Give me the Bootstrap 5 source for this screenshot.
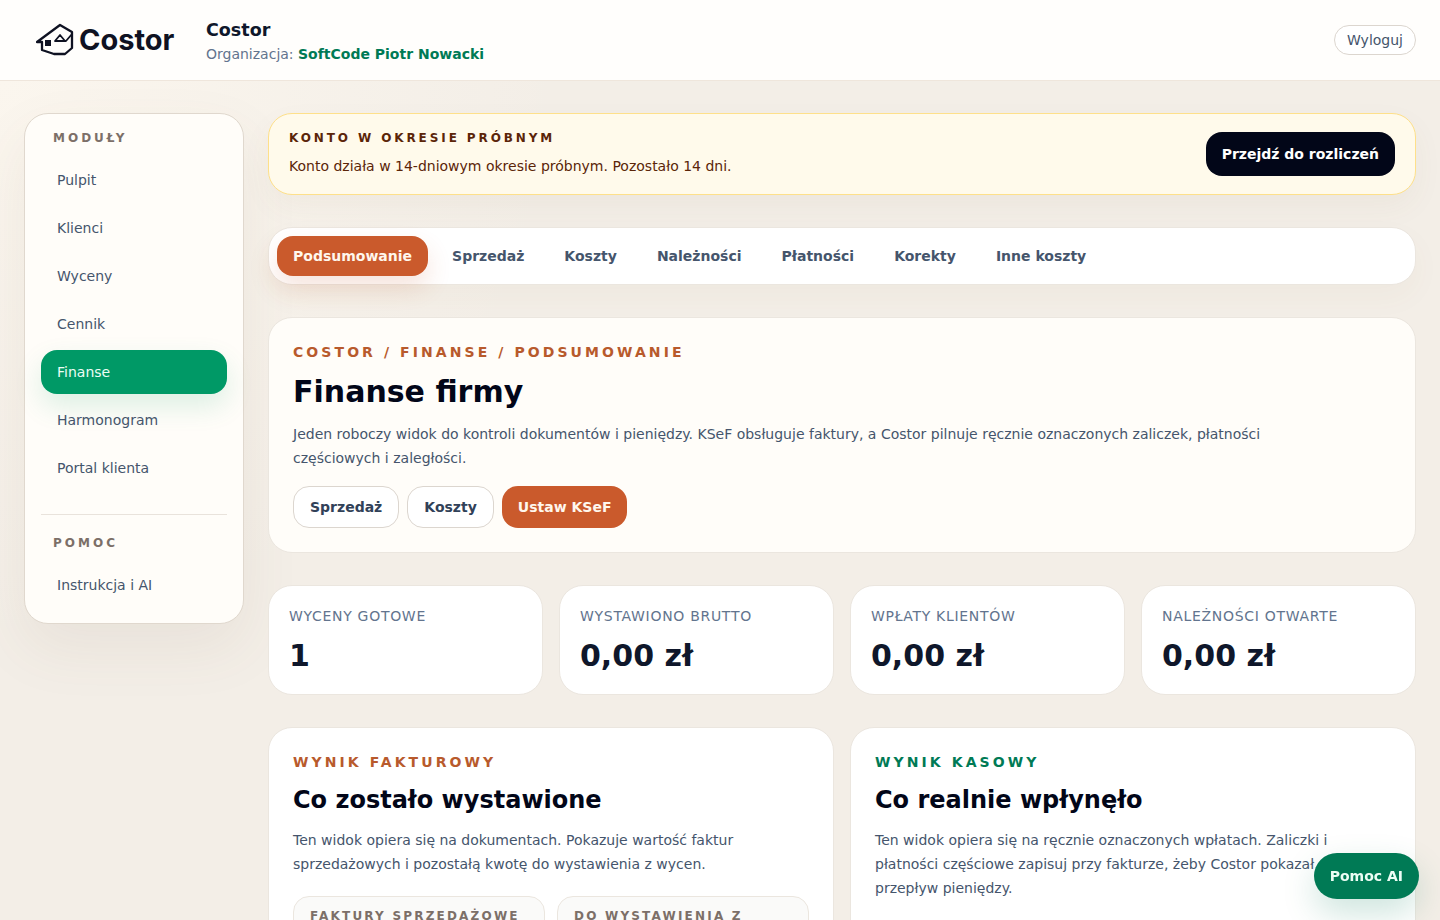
<!DOCTYPE html>
<html lang="pl">
<head>
    <meta charset="UTF-8">
    <meta name="viewport" content="width=device-width, initial-scale=1.0">
    <title>Finanse - Costor</title>
    <link href="https://cdn.jsdelivr.net/npm/bootstrap@5.3.0/dist/css/bootstrap.min.css" rel="stylesheet">
    <style>
        html, body { height: 920px; overflow: hidden; }
        body {
            font-family: "DejaVu Sans", sans-serif;
            background: radial-gradient(circle at 0 80px, #fbf6ee 0, rgba(251, 246, 238, 0) 560px), #f3eee7;
            color: #0b1020;
        }
        .top-bar { height: 81px; background: #fffefc; border-bottom: 1px solid #efe6dc; padding: 0 24px 0 36px; }
        .logo-word { font-family: "Inter", sans-serif; font-weight: 700; font-size: 29px; color: #0f1222; line-height: 1; margin: 0 0 2px 3px; }
        .org-block { padding-top: 2px; }
        .org-name { font-size: 17.5px; font-weight: 700; color: #0f172b; line-height: 22px; }
        .org-line { font-size: 14px; color: #62748e; line-height: 20px; margin-top: 3px; }
        .org-line b { color: #007a55; }
        .logout-btn { height: 30px; padding: 0 12px; border: 1px solid #dcd6cf; border-radius: 15px; background: #fff; font-size: 14px; color: #45556c; }

        .page-wrap { padding: 32px 24px 0; gap: 24px; }
        .side-panel { width: 220px; height: 511px; flex: none; background: #fffdf9; border: 1px solid #e0d8ce; border-radius: 24px; padding: 16px; box-shadow: 0 24px 60px rgba(120, 90, 60, .08); }
        .side-title { font-size: 12px; font-weight: 700; letter-spacing: 3px; color: #7c6f68; padding: 0 12px; line-height: 16px; margin-bottom: 12px; }
        .side-link { display: block; height: 44px; line-height: 44px; margin-bottom: 4px; padding: 0 16px; border-radius: 16px; font-size: 14px; color: #45556c; text-decoration: none; }
        .side-link.is-on { background: #009966; color: #ecfdf5; box-shadow: 0 12px 28px rgba(0, 153, 102, .14); }
        .side-sep { border-top: 1px solid #e9e3dc; margin: 24px 0 20px; }

        .main-col { width: 1148px; flex: none; }
        .trial-box { height: 82px; background: #fffaeb; border: 1px solid #fee08a; border-radius: 24px; padding: 0 20px; margin-bottom: 32px; box-shadow: 0 12px 30px rgba(120, 90, 60, .05); }
        .trial-title { font-size: 12px; font-weight: 700; letter-spacing: 2.9px; color: #5b2508; line-height: 16px; margin-bottom: 10px; position: relative; top: -1px; }
        .trial-text { font-size: 14px; color: #5b2508; line-height: 20px; position: relative; top: -1px; }
        .dark-btn { height: 44px; padding: 0 16px; background: #020618; color: #fff; border: 0; border-radius: 16px; font-size: 14px; font-weight: 700; }

        .tab-bar { height: 58px; background: #fff; border: 1px solid #ebe6df; border-radius: 24px; padding: 0 8px; gap: 8px; margin-bottom: 32px; box-shadow: 0 12px 30px rgba(120, 90, 60, .04); }
        .tab-link { height: 40px; line-height: 40px; padding: 0 16px; border-radius: 16px; font-size: 14px; font-weight: 700; color: #45556c; text-decoration: none; }
        .tab-link.is-on { background: #ca5a2c; color: #fff7ed; box-shadow: 0 12px 24px rgba(202, 90, 44, .16); }

        .hero-box { height: 236px; background: #fffdf9; border: 1px solid #ebe6df; border-radius: 24px; padding: 24px; margin-bottom: 32px; }
        .crumb-line { font-size: 14px; font-weight: 700; letter-spacing: 3.08px; color: #b85a2c; line-height: 20px; }
        .hero-title { font-size: 30px; font-weight: 700; line-height: 36px; margin: 12px 0 0; color: #020618; }
        .hero-text { font-size: 14px; line-height: 24px; color: #45556c; margin: 12px 0 0; max-width: 1000px; }
        .soft-btn { height: 42px; padding: 0 16px; border-radius: 16px; font-size: 14px; font-weight: 700; background: #fff; border: 1px solid #dcd6cf; color: #314158; }
        .soft-btn.is-hot { background: #ca5a2c; border: 0; color: #fff7ed; }

        .stat-grid { margin-bottom: 32px; }
        .stat-box { height: 110px; background: #fff; border: 1px solid #ebe6df; border-radius: 24px; padding: 20px; }
        .stat-label { font-size: 14px; letter-spacing: .7px; color: #62748e; line-height: 20px; text-transform: uppercase; }
        .stat-num { font-size: 30px; font-weight: 700; line-height: 36px; margin-top: 12px; color: #0f172b; }

        .result-box { height: 300px; background: #fff; border: 1px solid #ebe6df; border-radius: 24px; padding: 24px; }
        .result-kicker { font-size: 14px; font-weight: 700; letter-spacing: 3.08px; line-height: 20px; }
        .result-title { font-size: 24px; font-weight: 700; line-height: 32px; margin: 12px 0 0; color: #020618; }
        .result-text { font-size: 14px; line-height: 24px; color: #45556c; margin: 12px 0 0; max-width: 490px; }
        .mini-row { display: grid; grid-template-columns: repeat(2, 1fr); gap: 12px; margin-top: 20px; }
        .mini-box { background: #fafaf9; border: 1px solid #ebe6df; border-radius: 16px; padding: 11px 16px; font-size: 12px; font-weight: 700; letter-spacing: 2.2px; color: #7c6f68; line-height: 16px; height: 80px; }
        .hot-ink { color: #b85a2c; }
        .green-ink { color: #007a55; }

        .help-float { position: fixed; right: 21px; bottom: 21px; height: 46px; padding: 0 16px; border: 0; border-radius: 23px; background: #007a55; color: #ecfdf5; font-size: 14px; font-weight: 700; box-shadow: 0 14px 34px rgba(0, 122, 85, .2); }
    </style>
</head>
<body>
<header class="top-bar d-flex align-items-center justify-content-between">
    <div class="d-flex align-items-center">
        <div class="d-flex align-items-center" style="width:170px">
            <svg width="40" height="34" viewBox="36 22 40 34" fill="none" stroke="#0f1222" stroke-width="2.3" stroke-linejoin="round" stroke-linecap="round">
                <path d="M37 41 L60 24 L72 31 V47 L65 53 H54 L42 49 V41 Z"/>
                <path d="M72 33 L66 40 H55 L60 34 L65 40" stroke-width="1.8"/>
                <rect x="45" y="39" width="6" height="6" fill="#0f1222" stroke="none"/>
            </svg>
            <span class="logo-word">Costor</span>
        </div>
        <div class="org-block">
            <div class="org-name">Costor</div>
            <div class="org-line">Organizacja: <b>SoftCode Piotr Nowacki</b></div>
        </div>
    </div>
    <button class="logout-btn" type="button">Wyloguj</button>
</header>

<div class="page-wrap d-flex align-items-start">
    <aside class="side-panel">
        <div class="side-title">MODUŁY</div>
        <nav>
            <a class="side-link" href="#">Pulpit</a>
            <a class="side-link" href="#">Klienci</a>
            <a class="side-link" href="#">Wyceny</a>
            <a class="side-link" href="#">Cennik</a>
            <a class="side-link is-on" href="#">Finanse</a>
            <a class="side-link" href="#">Harmonogram</a>
            <a class="side-link" href="#">Portal klienta</a>
        </nav>
        <div class="side-sep"></div>
        <div class="side-title">POMOC</div>
        <a class="side-link" href="#">Instrukcja i AI</a>
    </aside>

    <main class="main-col">
        <section class="trial-box d-flex align-items-center justify-content-between">
            <div>
                <div class="trial-title">KONTO W OKRESIE PRÓBNYM</div>
                <div class="trial-text">Konto działa w 14-dniowym okresie próbnym. Pozostało 14 dni.</div>
            </div>
            <button class="dark-btn" type="button">Przejdź do rozliczeń</button>
        </section>

        <nav class="tab-bar d-flex align-items-center">
            <a class="tab-link is-on" href="#">Podsumowanie</a>
            <a class="tab-link" href="#">Sprzedaż</a>
            <a class="tab-link" href="#">Koszty</a>
            <a class="tab-link" href="#">Należności</a>
            <a class="tab-link" href="#">Płatności</a>
            <a class="tab-link" href="#">Korekty</a>
            <a class="tab-link" href="#">Inne koszty</a>
        </nav>

        <section class="hero-box">
            <div class="crumb-line">COSTOR / FINANSE / PODSUMOWANIE</div>
            <h1 class="hero-title">Finanse firmy</h1>
            <p class="hero-text">Jeden roboczy widok do kontroli dokumentów i pieniędzy. KSeF obsługuje faktury, a Costor pilnuje ręcznie oznaczonych zaliczek, płatności częściowych i zaległości.</p>
            <div class="d-flex gap-2 mt-3">
                <button class="soft-btn" type="button">Sprzedaż</button>
                <button class="soft-btn" type="button">Koszty</button>
                <button class="soft-btn is-hot" type="button">Ustaw KSeF</button>
            </div>
        </section>

        <div class="d-grid gap-3 stat-grid" style="grid-template-columns:repeat(4,1fr)">
            <div class="stat-box"><div class="stat-label">Wyceny gotowe</div><div class="stat-num">1</div></div>
            <div class="stat-box"><div class="stat-label">Wystawiono brutto</div><div class="stat-num">0,00 zł</div></div>
            <div class="stat-box"><div class="stat-label">Wpłaty klientów</div><div class="stat-num">0,00 zł</div></div>
            <div class="stat-box"><div class="stat-label">Należności otwarte</div><div class="stat-num">0,00 zł</div></div>
        </div>

        <div class="d-grid gap-3" style="grid-template-columns:repeat(2,1fr)">
            <section class="result-box">
                <div class="result-kicker hot-ink">WYNIK FAKTUROWY</div>
                <h2 class="result-title">Co zostało wystawione</h2>
                <p class="result-text">Ten widok opiera się na dokumentach. Pokazuje wartość faktur sprzedażowych i pozostałą kwotę do wystawienia z wycen.</p>
                <div class="mini-row">
                    <div class="mini-box">FAKTURY SPRZEDAŻOWE</div>
                    <div class="mini-box">DO WYSTAWIENIA Z WYCEN</div>
                </div>
            </section>
            <section class="result-box">
                <div class="result-kicker green-ink">WYNIK KASOWY</div>
                <h2 class="result-title">Co realnie wpłynęło</h2>
                <p class="result-text">Ten widok opiera się na ręcznie oznaczonych wpłatach. Zaliczki i płatności częściowe zapisuj przy fakturze, żeby Costor pokazał przepływ pieniędzy.</p>
            </section>
        </div>
    </main>
</div>

<button class="help-float" type="button">Pomoc AI</button>

<script src="https://cdn.jsdelivr.net/npm/bootstrap@5.3.0/dist/js/bootstrap.bundle.min.js"></script>
</body>
</html>
